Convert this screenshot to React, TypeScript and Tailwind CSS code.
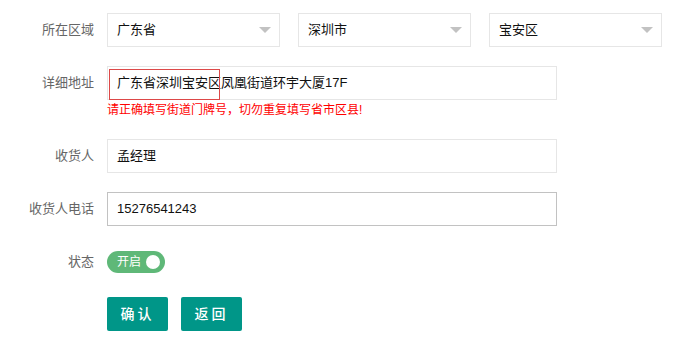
const font = { fontFamily: '"Liberation Sans", "Noto Sans CJK SC", sans-serif' };

const Select = ({ value }: { value: string }) => (
  <div className="relative flex h-[34px] w-[173px] items-center border border-[#e6e6e6] bg-white pl-[9px] text-[13px] text-[#111]">
    <span>{value}</span>
    <span className="absolute right-[8px] top-[13px] h-0 w-0 border-x-[6px] border-t-[6px] border-x-transparent border-t-[#c2c2c2]" />
  </div>
);

const Label = ({ children }: { children: string }) => (
  <label className="w-[94px] shrink-0 text-right text-[13px] leading-[34px] text-[#666]">{children}</label>
);

export default function App() {
  return (
    <div className="min-h-screen w-[695px] bg-white pt-[13px]" style={font}>
      <div className="flex gap-[13px]">
        <Label>所在区域</Label>
        <div className="flex gap-[18px]">
          <Select value="广东省" />
          <Select value="深圳市" />
          <Select value="宝安区" />
        </div>
      </div>

      <div className="mt-[19px] flex gap-[13px]">
        <Label>详细地址</Label>
        <div>
          <div className="relative flex h-[34px] w-[450px] items-center border border-[#e6e6e6] pl-[9px] text-[13px] text-[#111]">
            广东省深圳宝安区凤凰街道环宇大厦17F
            <span className="absolute left-[1px] top-[2px] h-[31px] w-[111px] border border-[#dd4848]" />
          </div>
          <p className="mt-[1px] text-[12px] leading-[18px] text-[#ff0000]">请正确填写街道门牌号，切勿重复填写省市区县!</p>
        </div>
      </div>

      <div className="mt-[20px] flex gap-[13px]">
        <Label>收货人</Label>
        <div className="flex h-[34px] w-[450px] items-center border border-[#e6e6e6] pl-[9px] text-[13px] text-[#111]">孟经理</div>
      </div>

      <div className="mt-[19px] flex gap-[13px]">
        <Label>收货人电话</Label>
        <div className="flex h-[34px] w-[450px] items-center border border-[#c2c2c2] pl-[9px] text-[13px] text-[#111]">15276541243</div>
      </div>

      <div className="mt-[19px] flex items-center gap-[13px]">
        <Label>状态</Label>
        <div className="relative flex h-[22px] w-[58px] items-center rounded-full bg-[#5fb878] pl-[10px] text-[12px] text-white">
          开启
          <span className="absolute right-[5px] top-[4px] h-[14px] w-[14px] rounded-full bg-white" />
        </div>
      </div>

      <div className="mt-[18px] flex gap-[13px] pl-[107px]">
        <button className="h-[34px] w-[61px] rounded-[2px] bg-[#009688] text-[14px] font-medium tracking-[3px] text-white">确认</button>
        <button className="h-[34px] w-[61px] rounded-[2px] bg-[#009688] text-[14px] font-medium tracking-[3px] text-white">返回</button>
      </div>
    </div>
  );
}
